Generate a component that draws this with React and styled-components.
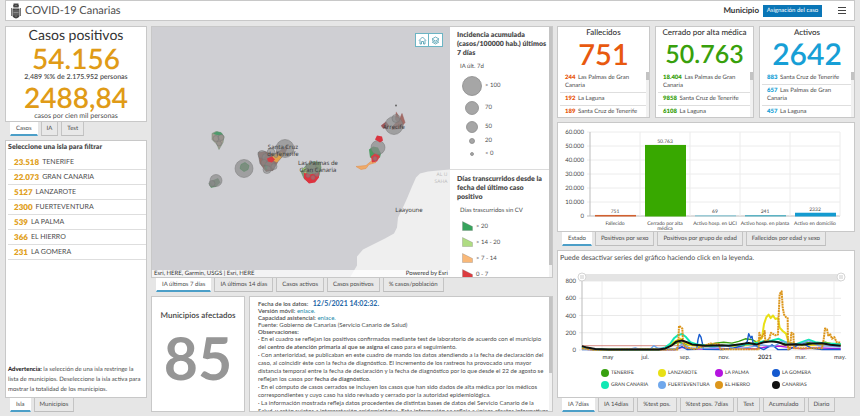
import React, { useState } from "react";
import styled, { createGlobalStyle } from "styled-components";

const GlobalStyle = createGlobalStyle`
  *, *::before, *::after { box-sizing: border-box; }
  body {
    margin: 0;
    background: #e6e6e6;
    color: #4c4c4c;
    font-family: Lato, "Open Sans", sans-serif;
    font-size: 6px;
    line-height: 9px;
    text-rendering: geometricPrecision;
  }
  button, select { font: inherit; color: inherit; text-rendering: inherit; }
  h1, h2, h3, p, ul { margin: 0; padding: 0; font-weight: inherit; }
  ul { list-style: none; }
`;

const line = "#c8c8c8";

const Page = styled.div`
  height: 100vh;
  min-height: 416px;
  padding: 0 5px 4px;
  display: flex;
  flex-direction: column;
  gap: 5px;
`;

const Header = styled.header`
  height: 21px;
  flex: none;
  display: flex;
  align-items: center;
  gap: 4px;
  padding: 0 6px 0 5px;
  background: #fff;
  border: 1px solid ${line};
`;

const Title = styled.h1`
  flex: 1;
  font-size: 11px;
  line-height: 14px;
`;

const FilterLabel = styled.label`
  font-size: 8px;
  font-weight: 700;
  color: #333;
`;

const FilterButton = styled.button`
  height: 12px;
  width: 59px;
  margin-right: 10px;
  padding: 0;
  border: 0;
  background: #0a76b7;
  color: #fff;
  font-size: 6px;
  line-height: 12px;
`;

const IconButton = styled.button`
  display: flex;
  padding: 1px;
  border: 0;
  background: none;
`;

const Columns = styled.main`
  flex: 1;
  min-height: 0;
  display: grid;
  grid-template-columns: 142fr 402fr 298fr;
  gap: 4px;
`;

const Column = styled.div`
  min-width: 0;
  min-height: 0;
  display: flex;
  flex-direction: column;
  gap: 4px;
`;

const Group = styled.section`
  display: flex;
  flex-direction: column;
  min-height: 0;
  flex: ${(p) => (p.$grow ? "1 1 0" : "none")};
`;

const Card = styled.div`
  flex: 1;
  min-width: 0;
  min-height: 0;
  display: flex;
  flex-direction: column;
  background: #fff;
  border: 1px solid ${line};
  overflow: hidden;
`;

const TabBar = styled.div`
  display: flex;
  gap: 3px;
  padding-left: 5px;
  height: 14px;
  flex: none;
`;

const Tab = styled.button`
  height: 14px;
  padding: 0 5px;
  border: 1px solid ${(p) => (p.$active ? "#fff" : "#c4c4c4")};
  border-top: 0;
  border-bottom: ${(p) => (p.$active ? "2px solid #4c9fc8" : "1px solid #bdbdbd")};
  background: ${(p) => (p.$active ? "#fff" : "#e8e8e8")};
  line-height: 11px;
  white-space: nowrap;
`;

const Summary = styled(Card)`
  text-align: center;
  align-items: center;
`;

const SummaryTitle = styled.h2`
  font-size: 14px;
  line-height: 16px;
  color: #333;
`;

const SummaryValue = styled.p`
  font-size: 28px;
  line-height: 30px;
  font-weight: 600;
  color: #e09b17;
`;

const SummaryNote = styled.p`
  font-size: 7px;
  line-height: 9px;
  font-weight: ${(p) => (p.$strong ? 600 : 400)};
`;

const PanelHeading = styled.h3`
  padding: 2px 2px 3px;
  font-weight: 800;
`;

const IslandList = styled.ul`
  flex: 1;
  padding-left: 2px;
`;

const IslandRow = styled.li`
  height: 15px;
  padding-left: 6px;
  display: flex;
  align-items: center;
  gap: 3px;
  border-bottom: 1px solid #dedede;
  font-size: 7px;
  b { font-size: 8px; font-weight: 800; color: #dfa021; }
`;

const Warning = styled.p`
  padding: 0 4px 2px 2px;
  line-height: 10px;
  b { color: #111; }
`;

const MapCard = styled(Card)`
  flex-direction: row;
`;

const MapArea = styled.div`
  position: relative;
  flex: 1;
  min-width: 0;
  background: #cfcfd3;
  overflow: hidden;
  > svg { display: block; width: 100%; height: 100%; }
`;

const MapTools = styled.div`
  position: absolute;
  top: 6px;
  right: 7px;
  display: flex;
`;

const MapTool = styled.button`
  width: 14px;
  height: 14px;
  padding: 0;
  display: grid;
  place-items: center;
  background: #fff;
  border: 1px solid #6cb5c4;
  & + & { border-left: 0; }
`;

const Attribution = styled.div`
  position: absolute;
  left: 0;
  right: 0;
  bottom: 0;
  display: flex;
  justify-content: space-between;
  padding: 0 2px;
  background: rgba(255, 255, 255, 0.75);
  line-height: 7px;
  color: #333;
`;

const LegendPanel = styled.aside`
  width: 99px;
  flex: none;
  overflow: hidden;
`;

const LegendBlock = styled.div`
  padding: 4px 2px 0 7px;
  & + & {
    margin-top: 8px;
    padding-top: 5px;
    border-top: 1px solid #dcdcdc;
  }
`;

const LegendTitle = styled.h3`
  font-weight: 800;
  line-height: 9px;
`;

const LegendSubtitle = styled.p`
  padding: 4px 0 2px 3px;
  line-height: 10px;
`;

const LegendRow = styled.li`
  height: ${(p) => p.$h}px;
  padding-left: 5px;
  display: flex;
  align-items: center;
  gap: 3px;
  svg { flex: none; }
`;

const ScrollTrack = styled.div`
  width: 3px;
  flex: none;
  background: #f1f1f1;
  &::before {
    content: "";
    display: block;
    height: ${(p) => p.$size}%;
    background: #c3c3c3;
  }
`;

const BottomRow = styled.div`
  flex: none;
  height: 116px;
  display: grid;
  grid-template-columns: 94fr 304fr;
  gap: 4px;
`;

const CountCard = styled(Card)`
  align-items: center;
  padding-top: 12px;
  h2 { font-size: 8px; line-height: 12px; font-weight: 600; color: #444; }
  p { margin-top: 3px; font-size: 59px; line-height: 68px; font-weight: 700; color: #969696; }
`;

const InfoCard = styled(Card)`
  flex-direction: row;
`;

const InfoText = styled.div`
  flex: 1;
  min-width: 0;
  padding: 3px 0 0 8px;
  line-height: 8px;
  text-rendering: auto;
  b { font-weight: 600; }
  a { color: #1787a8; text-decoration: none; }
`;

const InfoMeta = styled.div`
  line-height: 7px;
  time { margin-left: 3px; font-size: 7px; font-weight: 700; color: #1d66a6; }
`;

const KpiRow = styled.div`
  flex: none;
  height: 92px;
  display: grid;
  grid-template-columns: 93fr 99fr 96fr;
  gap: 5px;
`;

const KpiCard = styled(Card)`
  h2 {
    font-size: 8px;
    line-height: 10px;
    font-weight: 500;
    text-align: center;
    white-space: nowrap;
    color: #333;
  }
`;

const KpiValue = styled.p`
  height: 35px;
  line-height: 35px;
  text-align: center;
  font-size: ${(p) => p.$size}px;
  font-weight: 600;
  color: ${(p) => p.$color};
`;

const KpiBody = styled.div`
  flex: 1;
  min-height: 0;
  display: flex;
`;

const KpiList = styled.ul`
  flex: 1;
  min-width: 0;
  padding-left: 2px;
  li {
    padding: 2px 2px 2px 5px;
    line-height: 8px;
    border-bottom: 1px solid #dedede;
  }
  li:last-child { border-bottom: 0; }
  b { margin-right: 1px; font-weight: 800; color: ${(p) => p.$color}; }
`;

const ChartSvg = styled.svg`
  display: block;
  width: 100%;
  flex: none;
  font-size: 6px;
  fill: #444;
`;

const ChartNote = styled.p`
  padding: 3px 2px 5px;
  font-size: 7px;
`;

const SeriesLegend = styled.div`
  display: grid;
  grid-template-columns: repeat(4, 57px);
  justify-content: center;
  row-gap: 2px;
  padding: 2px 0 0 18px;
`;

const SeriesButton = styled.button`
  height: 10px;
  padding: 0;
  display: flex;
  align-items: center;
  gap: 2px;
  border: 0;
  background: none;
  font-size: 5px;
  font-weight: 500;
  line-height: 10px;
  white-space: nowrap;
  opacity: ${(p) => (p.$off ? 0.4 : 1)};
  &::before {
    content: "";
    flex: none;
    width: 8px;
    height: 8px;
    border-radius: 50%;
    background: ${(p) => p.$color};
  }
`;

function Tabs({ items }) {
  const [active, setActive] = useState(0);
  return (
    <TabBar role="tablist">
      {items.map((t, i) => (
        <Tab key={t} role="tab" aria-selected={i === active} $active={i === active} onClick={() => setActive(i)}>
          {t}
        </Tab>
      ))}
    </TabBar>
  );
}

function Crest() {
  return (
    <svg width="10" height="16" viewBox="0 0 20 32" fill="#444" aria-hidden="true">
      <path d="M5 1h10v3H5zM4 5l2-2 4 2 4-2 2 2-1 4H5z" />
      <path d="M3 11h14v14q0 4-7 6-7-2-7-6z" />
      <path d="M0 10h2v16H0zM18 10h2v16h-2z" fill="#777" />
      <path d="M6 14v11M10 13v15M14 14v11M5 19h10" stroke="#bbb" strokeWidth="1" fill="none" />
    </svg>
  );
}

const islands = [
  ["23.518", "TENERIFE"],
  ["22.073", "GRAN CANARIA"],
  ["5127", "LANZAROTE"],
  ["2300", "FUERTEVENTURA"],
  ["539", "LA PALMA"],
  ["366", "EL HIERRO"],
  ["231", "LA GOMERA"],
];

function IslandMap() {
  const dot = { fill: "#8a8a8a", fillOpacity: 0.7, stroke: "#777", strokeWidth: 0.5 };
  return (
    <svg viewBox="0 0 298 251" preserveAspectRatio="xMidYMid slice" role="img" aria-label="Mapa de Canarias">
      <rect width="298" height="251" fill="#cfcfd3" />
      <path d="M298 143l-12 1-10 1-8 2-4 4-4 9-5 12-5 11-4 8-1 10-3 6-9 5-16 8-6 3-6 7v9l-7 12h100z" fill="#efefef" />
      <g strokeWidth="0.5">
        <path d="M60 107l4-2 5 1 3 4-1 6-4 7-2-5-5-5z" fill="#a39a90" stroke="#6c8a6e" />
        <path d="M61 107l4-2 4 1 2 2-4 1-4-1z" fill="#4f9a6c" />
        <circle cx="64" cy="112" r="3" {...dot} fillOpacity="0.4" />
        <circle cx="69" cy="111" r="3" {...dot} fillOpacity="0.4" />
        <circle cx="67" cy="117" r="2.500" {...dot} fillOpacity="0.4" />
        <circle cx="92" cy="142" r="9" {...dot} />
        <path d="M89 138l4-2 4 3-1 4-4 2-4-3z" fill="#7c8e7f" stroke="#5a8a66" />
        <path d="M57 157l4-3 5-2 2 4-4 4-5 1z" fill="#6f8f76" stroke="#4d8a5c" />
        <circle cx="64" cy="154" r="6" {...dot} />
        <circle cx="60" cy="157" r="3" {...dot} />
      </g>
      <g strokeWidth="0.5">
        <path d="M106 126l7-1 8 3 6-3 5-4 4-2-3 8-7 8-5 9-7 1-6-8z" fill="#96706a" stroke="#666" />
        <path d="M120 127l6 1 3-3 3 3-7 8-4-2z" fill="#e0a24a" />
        <path d="M112 138l4 2-2 4z" fill="#3f9a60" />
        {[[110, 128, 4], [114, 131, 4], [119, 126, 4], [112, 136, 3], [118, 139, 5], [115, 143, 4], [124, 129, 2], [122, 140, 3]].map(([x, y, r]) => (
          <circle key={`${x}-${y}`} cx={x} cy={y} r={r} {...dot} fillOpacity="0.55" />
        ))}
        <path d="M115 132l5-2 3 3-3 3-4-1z" fill="#d83b43" />
        <circle cx="133" cy="122" r="9" {...dot} />
      </g>
      <g strokeWidth="0.5">
        <path d="M155 138l7-3 6 1 1 5-2 8-4 5-6 2-5-4-3-7z" fill="#7f9278" stroke="#46895a" />
        <path d="M152 146l6 2 9-2v5l-4 5-6 1-5-5z" fill="#dd333f" />
        <path d="M150 142l4-1 2 4-3 2z" fill="#a7cf78" />
        {[[159, 141, 5], [163, 145, 3], [156, 149, 2], [161, 151, 2], [165, 148, 2], [155, 144, 2]].map(([x, y, r]) => (
          <circle key={`${x}-${y}`} cx={x} cy={y} r={r} {...dot} fillOpacity="0.5" />
        ))}
      </g>
      <g strokeWidth="0.5">
        <path d="M220 134l-6 5-10 1 5 3 5-1 3-4 7-2z" fill="#efaa68" stroke="#e08b45" />
        <path d="M217 123l4-3 5 1 3 6-1 4-5 2-5-2z" fill="#4c9c61" />
        <path d="M219 130l5-4 4 4-3 5-5 1z" fill="#d93d43" />
        <circle cx="223" cy="132" r="2" {...dot} fillOpacity="0.5" />
        <circle cx="226" cy="121" r="7" {...dot} />
        <path d="M223 113l2-4 5 1 1 4-3 2z" fill="#d9343f" />
        <path d="M240 101l4-5 3-2 3-7 2 6 1 3-5 6-8 1z" fill="#a46c66" stroke="#965a58" />
        <path d="M229 99l5-4 3 4-2 4-5-2z" fill="#9c5559" />
        <path d="M243 93l1-8 2 3 2 5-2 3z" fill="#a46c66" />
        <circle cx="242" cy="99" r="9" {...dot} fillOpacity="0.7" />
        <circle cx="244" cy="92" r="4" {...dot} fillOpacity="0.5" />
        <circle cx="244" cy="79" r="1" fill="#666" />
      </g>
      <g fontSize="6" fill="#3b3b3b" textAnchor="middle" fontFamily="Noto Sans, sans-serif">
        <text x="131" y="122">Santa Cruz</text>
        <text x="131" y="129">de Tenerife</text>
        <text x="166" y="138">Las Palmas de</text>
        <text x="166" y="145">Gran Canaria</text>
        <text x="242" y="102">Arrecife</text>
        <text x="257" y="185">Laayoune</text>
        <g fill="#bdbdbd" fontSize="5">
          <text x="290" y="149">AL U</text>
          <text x="289" y="156">SAHA</text>
        </g>
      </g>
    </svg>
  );
}

const sizes = [
  ["> 100", 10, 23],
  ["70", 7, 21],
  ["50", 6, 17],
  ["20", 3, 11],
  ["< 0", 2, 15],
];

const ages = [
  ["> 20", "#37a35c"],
  ["> 14 - 20", "#afdc82"],
  ["> 7 - 14", "#f9b878"],
  ["0 - 7", "#dc3c40"],
];

const kpis = [
  {
    title: "Fallecidos", value: "751", size: 29, color: "#e8590f",
    rows: [["244", "Las Palmas de Gran Canaria"], ["192", "La Laguna"], ["189", "Santa Cruz de Tenerife"]],
  },
  {
    title: "Cerrado por alta médica", value: "50.763", size: 25, color: "#38a00c",
    rows: [["18.404", "Las Palmas de Gran Canaria"], ["9858", "Santa Cruz de Tenerife"], ["6108", "La Laguna"]],
  },
  {
    title: "Activos", value: "2642", size: 30, color: "#179fd6",
    rows: [["883", "Santa Cruz de Tenerife"], ["657", "Las Palmas de Gran Canaria"], ["457", "La Laguna"]],
  },
];

const states = [
  ["Fallecido", 751, "751", "#d2602f"],
  ["Cerrado por alta|médica", 50763, "50.763", "#38a800"],
  ["Activo hosp. en UCI", 69, "69", "#9ccbd6"],
  ["Activo hosp. en planta", 241, "241", "#5cb3c4"],
  ["Activo en domicilio", 2332, "2332", "#149bd0"],
];

function StateChart() {
  const x0 = 32, step = 50, base = 93;
  const ticks = [0, 10, 20, 30, 40, 50, 60];
  return (
    <ChartSvg viewBox="0 0 296 108" role="img" aria-label="Casos por estado">
      {ticks.map((t) => {
        const y = base - t * 1.4;
        return (
          <g key={t}>
            <path d={`M${x0 - 3} ${y}H${x0 + step * 5}`} stroke={t ? "#ececec" : "#bbb"} />
            <text x="26" y={y + 2} textAnchor="end">{t ? `${t}.000` : "0"}</text>
          </g>
        );
      })}
      {[0, 1, 2, 3, 4, 5].map((i) => (
        <path key={i} d={`M${x0 + i * step} 9V${base}`} stroke={i ? "#ececec" : "#bbb"} />
      ))}
      {states.map(([name, v, label, color], i) => {
        const h = Math.max((v / 1000) * 1.4, 1);
        const cx = x0 + step * i + step / 2;
        return (
          <g key={name} textAnchor="middle">
            <rect x={cx - 20} y={base - h} width="41" height={h + 0.5} fill={color} />
            <text x={cx} y={base - h - 2} fontSize="5">{label}</text>
            {name.split("|").map((part, n) => (
              <text key={part} x={cx} y={102 + n * 5} fontSize="5">{part}</text>
            ))}
          </g>
        );
      })}
    </ChartSvg>
  );
}

// Each point is [position along the time axis (0-776), incidence].
const series = [
  { name: "TENERIFE", color: "#38a010", data: [[0, 40], [30, 15], [60, 6], [240, 6], [270, 60], [290, 90], [320, 60], [350, 55], [385, 60], [400, 80], [425, 90], [450, 80], [470, 100], [490, 130], [510, 120], [530, 80], [550, 110], [580, 95], [610, 70], [640, 60], [670, 90], [700, 75], [730, 90], [750, 70], [776, 65]] },
  { name: "LANZAROTE", color: "#e8e015", data: [[0, 20], [40, 5], [250, 5], [275, 90], [295, 130], [320, 60], [360, 40], [420, 45], [480, 50], [520, 80], [540, 140], [546, 300], [553, 380], [560, 410], [566, 370], [573, 400], [580, 360], [588, 370], [593, 260], [602, 220], [612, 190], [620, 90], [650, 55], [700, 60], [740, 75], [776, 60]], width: 2 },
  { name: "LA PALMA", color: "#b514e0", data: [[0, 12], [40, 3], [280, 4], [300, 30], [330, 12], [400, 10], [470, 20], [520, 12], [560, 40], [590, 45], [620, 30], [660, 15], [710, 25], [776, 15]] },
  { name: "LA GOMERA", color: "#1459cf", data: [[0, 4], [280, 4], [300, 40], [315, 6], [344, 8], [348, 120], [352, 180], [357, 150], [361, 80], [364, 8], [420, 5], [450, 20], [485, 50], [496, 100], [500, 190], [506, 140], [510, 160], [514, 60], [530, 30], [545, 5], [570, 60], [588, 4], [620, 5], [660, 80], [690, 20], [720, 5], [776, 6]] },
  { name: "GRAN CANARIA", color: "#10e8b4", data: [[0, 35], [30, 10], [80, 4], [230, 5], [250, 30], [265, 75], [277, 140], [289, 175], [300, 185], [312, 150], [325, 90], [345, 65], [375, 50], [420, 45], [470, 60], [510, 70], [540, 95], [570, 110], [590, 130], [610, 90], [640, 65], [680, 120], [700, 90], [730, 75], [776, 70]], width: 2 },
  { name: "FUERTEVENTURA", color: "#70a8ec", data: [[0, 8], [140, 6], [160, 25], [175, 5], [205, 8], [215, 50], [228, 20], [280, 15], [300, 70], [325, 20], [380, 25], [440, 45], [460, 10], [500, 30], [540, 60], [575, 40], [600, 100], [625, 80], [650, 60], [680, 110], [710, 50], [740, 45], [776, 35]] },
  { name: "EL HIERRO", color: "#dc961c", data: [[0, 20], [30, 4], [286, 5], [289, 100], [291, 280], [301, 250], [303, 90], [310, 30], [340, 10], [385, 75], [410, 70], [415, 10], [530, 10], [532, 200], [536, 140], [544, 170], [548, 220], [550, 90], [562, 130], [567, 200], [580, 170], [588, 180], [590, 400], [593, 650], [599, 680], [602, 500], [606, 410], [612, 380], [617, 370], [618, 10], [624, 10], [628, 200], [634, 190], [636, 20], [720, 20], [725, 120], [729, 250], [735, 240], [739, 160], [744, 190], [750, 130], [757, 150], [764, 90], [776, 85]], dashed: true, width: 2 },
  { name: "CANARIAS", color: "#111", data: [[0, 45], [15, 28], [40, 12], [80, 7], [230, 7], [250, 18], [268, 50], [282, 95], [300, 110], [315, 90], [330, 65], [370, 50], [420, 55], [440, 50], [470, 65], [500, 80], [525, 65], [545, 90], [570, 100], [590, 90], [610, 60], [640, 68], [660, 60], [690, 75], [720, 78], [745, 60], [776, 48]], width: 2 },
];

const months = [["may", 50, 44], ["jul.", 87, 83], ["sep.", 127, 121], ["nov.", 166, 160], ["2021", 207, 199], ["mar.", 243, 236], ["may.", 282, 276]];

function IncidenceChart({ hidden }) {
  const y = (v) => 82 - v * 0.08625;
  return (
    <ChartSvg viewBox="0 0 296 98" role="img" aria-label="Incidencia acumulada a 7 días">
      {[0, 200, 400, 600, 800].map((t) => (
        <g key={t}>
          <path d={`M21 ${y(t)}H283`} stroke="#e9e9e9" />
          <text x="18" y={y(t) + 2} textAnchor="end">{t}</text>
        </g>
      ))}
      {months.map(([m, x, gx]) => (
        <g key={gx}>
          <path d={`M${gx} 13V82`} stroke="#ececec" />
          <text x={x} y="91" textAnchor="middle" fontWeight={m === "2021" ? 700 : 400}>{m}</text>
        </g>
      ))}
      <path d="M24 13V82" stroke="#bbb" />
      <path d={`M24 ${y(50)}H283`} stroke="#c65a50" strokeWidth="0.7" />
      {series.filter((s) => !hidden[s.name]).map((s) => (
        <polyline
          key={s.name}
          points={s.data.map(([d, v]) => `${24 + d / 3},${y(v)}`).join(" ")}
          fill="none"
          stroke={s.color}
          strokeWidth={s.width || 1.4}
          strokeLinejoin="round"
          strokeDasharray={s.dashed ? "2 0.6" : undefined}
        />
      ))}
      <rect x="24" y="6" width="259" height="7" fill="#e4e4e4" />
      {[24, 283].map((x) => (
        <g key={x}>
          <circle cx={x} cy="9" r="4" fill="#fff" stroke="#d5d5d5" />
          <path d={`M${x - 1} 7v4M${x + 1} 7v4`} stroke="#aaa" strokeWidth="0.6" />
        </g>
      ))}
    </ChartSvg>
  );
}

export default function App() {
  const [hidden, setHidden] = useState({});
  return (
    <Page>
      <GlobalStyle />
      <Header>
        <Crest />
        <Title>COVID-19 Canarias</Title>
        <FilterLabel htmlFor="municipio">Municipio</FilterLabel>
        <FilterButton id="municipio">Asignación del caso</FilterButton>
        <IconButton aria-label="Menú">
          <svg width="10" height="9" viewBox="0 0 10 9" stroke="#444" strokeWidth="1">
            <path d="M1 1.500h8M1 4.500h8M1 7.500h8" />
          </svg>
        </IconButton>
      </Header>
      <Columns>
        <Column>
          <Group>
            <Summary>
              <SummaryTitle>Casos positivos</SummaryTitle>
              <SummaryValue>54.156</SummaryValue>
              <SummaryNote $strong>2,489 %% de 2.175.952 personas</SummaryNote>
              <SummaryValue>2488,84</SummaryValue>
              <SummaryNote>casos por cien mil personas</SummaryNote>
            </Summary>
            <Tabs items={["Casos", "IA", "Test"]} />
          </Group>
          <Group $grow>
            <Card>
              <PanelHeading>Seleccione una isla para filtrar</PanelHeading>
              <IslandList>
                {islands.map(([n, name]) => (
                  <IslandRow key={name}><b>{n}</b>{name}</IslandRow>
                ))}
              </IslandList>
              <Warning>
                <b>Advertencia:</b> la selección de una isla restringe la lista de municipios. Deseleccione la isla activa para mostrar la totalidad de los municipios.
              </Warning>
            </Card>
            <Tabs items={["Isla", "Municipios"]} />
          </Group>
        </Column>

        <Column>
          <Group $grow>
            <MapCard>
              <MapArea>
                <IslandMap />
                <MapTools>
                  <MapTool aria-label="Inicio">
                    <svg width="9" height="9" viewBox="0 0 18 18" fill="none" stroke="#3d94a8" strokeWidth="1.500">
                      <path d="M2 9l7-7 7 7M4 8v8h3v-5h4v5h3V8" />
                    </svg>
                  </MapTool>
                  <MapTool aria-label="Capas">
                    <svg width="9" height="9" viewBox="0 0 18 18" fill="none" stroke="#3d94a8" strokeWidth="1.500">
                      <path d="M9 2l7 4-7 4-7-4zM2 9l7 4 7-4M2 12l7 4 7-4" />
                    </svg>
                  </MapTool>
                </MapTools>
                <Attribution>
                  <span>Esri, HERE, Garmin, USGS | Esri, HERE</span>
                  <span>Powered by Esri</span>
                </Attribution>
              </MapArea>
              <LegendPanel>
                <LegendBlock>
                  <LegendTitle>Incidencia acumulada (casos/100000 hab.) últimos 7 días</LegendTitle>
                  <LegendSubtitle>IA últ. 7d</LegendSubtitle>
                  <ul>
                    {sizes.map(([t, r, h]) => (
                      <LegendRow key={t} $h={h}>
                        <svg width="20" height="20" viewBox="0 0 20 20">
                          <circle cx="10" cy="10" r={r - 0.5} fill="#a6a6a6" stroke="#8a8a8a" strokeWidth="0.8" />
                        </svg>
                        {t}
                      </LegendRow>
                    ))}
                  </ul>
                </LegendBlock>
                <LegendBlock>
                  <LegendTitle>Días transcurridos desde la fecha del último caso positivo</LegendTitle>
                  <LegendSubtitle>Días trascurridos sin CV</LegendSubtitle>
                  <ul>
                    {ages.map(([t, c]) => (
                      <LegendRow key={t} $h={16}>
                        <svg width="11" height="10" viewBox="0 0 11 10">
                          <path d="M.5.5l10 5v4H.5z" fill={c} stroke="#777" strokeOpacity=".5" strokeWidth=".6" />
                        </svg>
                        {t}
                      </LegendRow>
                    ))}
                  </ul>
                </LegendBlock>
              </LegendPanel>
              <ScrollTrack $size={95} />
            </MapCard>
            <Tabs items={["IA últimos 7 días", "IA últimos 14 días", "Casos activos", "Casos positivos", "% casos/población"]} />
          </Group>
          <BottomRow>
            <CountCard>
              <h2>Municipios afectados</h2>
              <p>85</p>
            </CountCard>
            <InfoCard>
              <InfoText>
                <InfoMeta>
                  <p><b>Fecha de los datos:</b> <time>12/5/2021 14:02:32.</time></p>
                  <p><b>Versión móvil:</b> <a href="#movil">enlace.</a></p>
                  <p><b>Capacidad asistencial:</b> <a href="#capacidad">enlace.</a></p>
                  <p>Fuente: Gobierno de Canarias (Servicio Canario de Salud)</p>
                  <p><b>Observaciones:</b></p>
                </InfoMeta>
                <p>· En el cuadro se reflejan los positivos confirmados mediante test de laboratorio de acuerdo con el municipio del <b>centro de atención primaria al que se asigna el caso</b> para el seguimiento.</p>
                <p>· Con anterioridad, se publicaban en este cuadro de mando los datos atendiendo a la fecha de declaración del caso, al coincidir éste con la fecha de diagnóstico. El incremento de los rastreos ha provocado una mayor distancia temporal entre la fecha de declaración y la fecha de diagnóstico por lo que desde el 22 de agosto se reflejan los casos por <b>fecha de diagnóstico</b>.</p>
                <p>· En el cómputo de casos cerrados se incluyen los casos que han sido dados de alta médica por los médicos correspondientes y cuyo caso ha sido revisado y cerrado por la autoridad epidemiológica.</p>
                <p>· La información mostrada refleja datos procedentes de distintas bases de datos del Servicio Canario de la Salud, y están sujetos a interpretación epidemiológica. Esta información se refleja a únicos efectos informativos y de</p>
              </InfoText>
              <ScrollTrack $size={67} />
            </InfoCard>
          </BottomRow>
        </Column>

        <Column>
          <KpiRow>
            {kpis.map((k) => (
              <KpiCard key={k.title}>
                <h2>{k.title}</h2>
                <KpiValue $size={k.size} $color={k.color}>{k.value}</KpiValue>
                <KpiBody>
                  <KpiList $color={k.color}>
                    {k.rows.map(([n, t]) => (
                      <li key={n}><b>{n}</b> {t}</li>
                    ))}
                  </KpiList>
                  <ScrollTrack $size={18} />
                </KpiBody>
              </KpiCard>
            ))}
          </KpiRow>
          <Group>
            <Card><StateChart /></Card>
            <Tabs items={["Estado", "Positivos por sexo", "Positivos por grupo de edad", "Fallecidos por edad y sexo"]} />
          </Group>
          <Group $grow>
            <Card>
              <ChartNote>Puede desactivar series del gráfico haciendo click en la leyenda.</ChartNote>
              <IncidenceChart hidden={hidden} />
              <SeriesLegend>
                {series.map(({ name, color }) => (
                  <SeriesButton
                    key={name}
                    $color={color}
                    $off={hidden[name]}
                    aria-pressed={!hidden[name]}
                    onClick={() => setHidden({ ...hidden, [name]: !hidden[name] })}
                  >
                    {name}
                  </SeriesButton>
                ))}
              </SeriesLegend>
            </Card>
            <Tabs items={["IA 7días", "IA 14días", "%test pos.", "%test pos. 7días", "Test", "Acumulado", "Diario"]} />
          </Group>
        </Column>
      </Columns>
    </Page>
  );
}
